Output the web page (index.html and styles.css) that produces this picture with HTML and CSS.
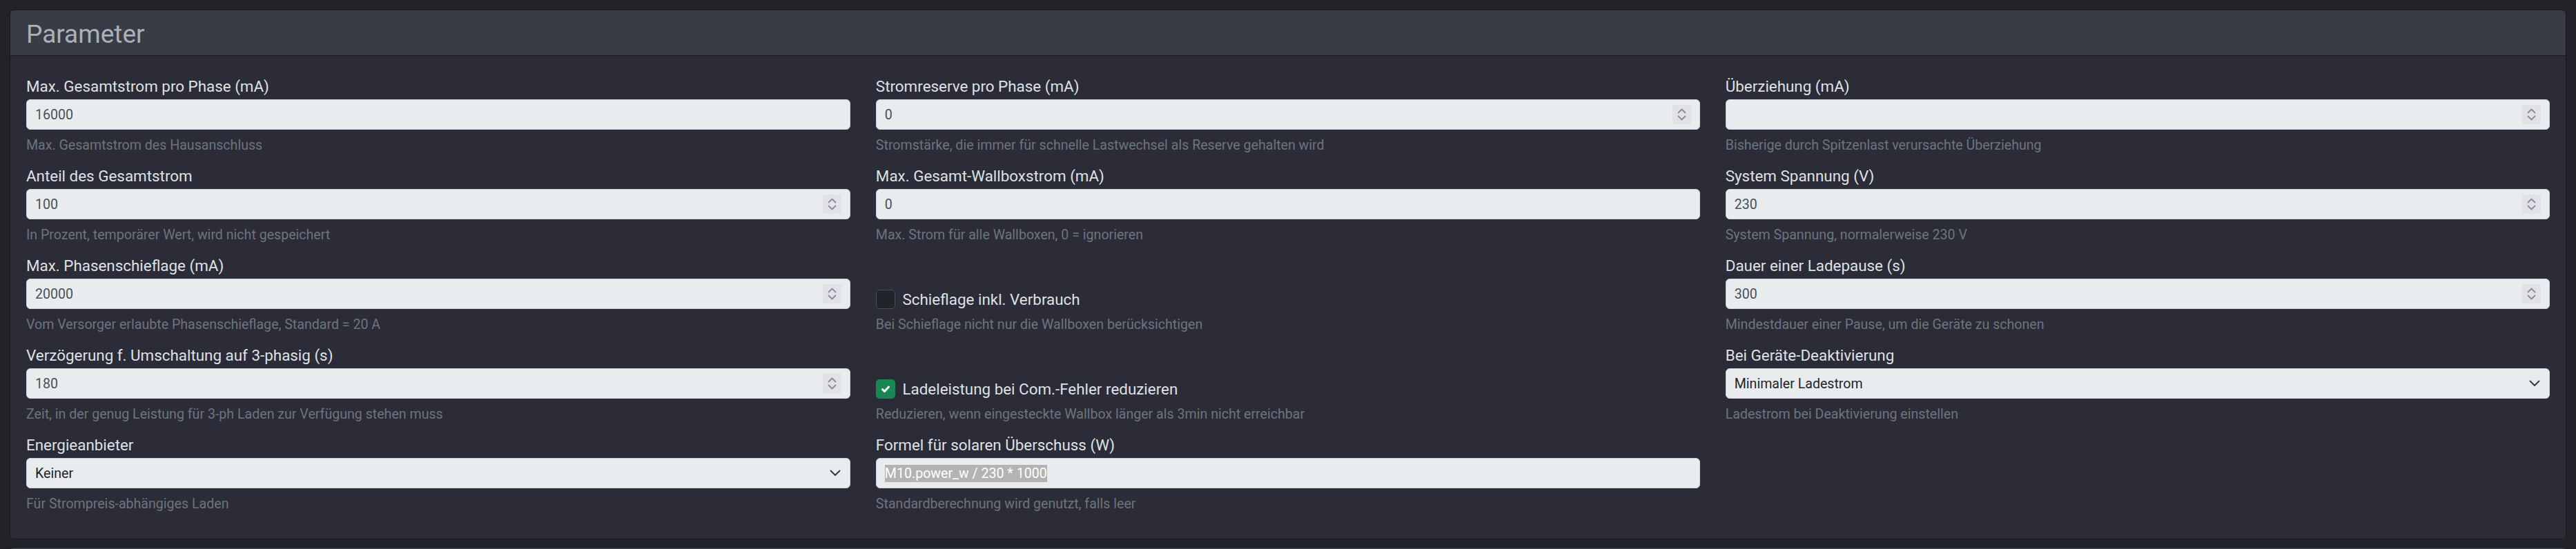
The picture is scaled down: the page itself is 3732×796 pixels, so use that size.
FILE: index.html
```html
<!DOCTYPE html>
<html lang="de">
<head>
<meta charset="utf-8">
<title>Parameter</title>
<link rel="stylesheet" href="styles.css">
</head>
<body>
<div class="page">
  <section class="card">
    <header class="card-header"><h3 class="card-title">Parameter</h3></header>
    <div class="card-body">
      <div class="grid">
        <!-- row 1 -->
        <div class="field">
          <label class="label">Max. Gesamtstrom pro Phase (mA)</label>
          <div class="control"><input type="text" value="16000"></div>
          <div class="help">Max. Gesamtstrom des Hausanschluss</div>
        </div>
        <div class="field">
          <label class="label">Stromreserve pro Phase (mA)</label>
          <div class="control"><input type="text" value="0"><span class="spin"><svg viewBox="0 0 27 28" width="27" height="28"><polyline points="8.5,11.5 13.5,6.5 18.5,11.5"/><polyline points="8.5,16.5 13.5,21.5 18.5,16.5"/></svg></span></div>
          <div class="help">Stromstärke, die immer für schnelle Lastwechsel als Reserve gehalten wird</div>
        </div>
        <div class="field">
          <label class="label">Überziehung (mA)</label>
          <div class="control"><input type="text" value=""><span class="spin"><svg viewBox="0 0 27 28" width="27" height="28"><polyline points="8.5,11.5 13.5,6.5 18.5,11.5"/><polyline points="8.5,16.5 13.5,21.5 18.5,16.5"/></svg></span></div>
          <div class="help">Bisherige durch Spitzenlast verursachte Überziehung</div>
        </div>
        <!-- row 2 -->
        <div class="field">
          <label class="label">Anteil des Gesamtstrom</label>
          <div class="control"><input type="text" value="100"><span class="spin"><svg viewBox="0 0 27 28" width="27" height="28"><polyline points="8.5,11.5 13.5,6.5 18.5,11.5"/><polyline points="8.5,16.5 13.5,21.5 18.5,16.5"/></svg></span></div>
          <div class="help">In Prozent, temporärer Wert, wird nicht gespeichert</div>
        </div>
        <div class="field">
          <label class="label">Max. Gesamt-Wallboxstrom (mA)</label>
          <div class="control"><input type="text" value="0"></div>
          <div class="help">Max. Strom für alle Wallboxen, 0 = ignorieren</div>
        </div>
        <div class="field">
          <label class="label">System Spannung (V)</label>
          <div class="control"><input type="text" value="230"><span class="spin"><svg viewBox="0 0 27 28" width="27" height="28"><polyline points="8.5,11.5 13.5,6.5 18.5,11.5"/><polyline points="8.5,16.5 13.5,21.5 18.5,16.5"/></svg></span></div>
          <div class="help">System Spannung, normalerweise 230 V</div>
        </div>
        <!-- row 3 -->
        <div class="field">
          <label class="label">Max. Phasenschieflage (mA)</label>
          <div class="control"><input type="text" value="20000"><span class="spin"><svg viewBox="0 0 27 28" width="27" height="28"><polyline points="8.5,11.5 13.5,6.5 18.5,11.5"/><polyline points="8.5,16.5 13.5,21.5 18.5,16.5"/></svg></span></div>
          <div class="help">Vom Versorger erlaubte Phasenschieflage, Standard = 20 A</div>
        </div>
        <div class="field field-check">
          <div class="check-row">
            <span class="check"></span>
            <span class="check-label">Schieflage inkl. Verbrauch</span>
          </div>
          <div class="help">Bei Schieflage nicht nur die Wallboxen berücksichtigen</div>
        </div>
        <div class="field">
          <label class="label">Dauer einer Ladepause (s)</label>
          <div class="control"><input type="text" value="300"><span class="spin"><svg viewBox="0 0 27 28" width="27" height="28"><polyline points="8.5,11.5 13.5,6.5 18.5,11.5"/><polyline points="8.5,16.5 13.5,21.5 18.5,16.5"/></svg></span></div>
          <div class="help">Mindestdauer einer Pause, um die Geräte zu schonen</div>
        </div>
        <!-- row 4 -->
        <div class="field">
          <label class="label">Verzögerung f. Umschaltung auf 3-phasig (s)</label>
          <div class="control"><input type="text" value="180"><span class="spin"><svg viewBox="0 0 27 28" width="27" height="28"><polyline points="8.5,11.5 13.5,6.5 18.5,11.5"/><polyline points="8.5,16.5 13.5,21.5 18.5,16.5"/></svg></span></div>
          <div class="help">Zeit, in der genug Leistung für 3-ph Laden zur Verfügung stehen muss</div>
        </div>
        <div class="field field-check">
          <div class="check-row">
            <span class="check checked"><svg viewBox="0 0 20 20" width="20" height="20"><path d="M5.5 10.5l3 3 6-6.5"/></svg></span>
            <span class="check-label">Ladeleistung bei Com.-Fehler reduzieren</span>
          </div>
          <div class="help">Reduzieren, wenn eingesteckte Wallbox länger als 3min nicht erreichbar</div>
        </div>
        <div class="field">
          <label class="label">Bei Geräte-Deaktivierung</label>
          <div class="control control-select"><select><option>Minimaler Ladestrom</option></select><svg class="chev" viewBox="0 0 16 10" width="16" height="10"><polyline points="1.5,1.5 8,8 14.5,1.5"/></svg></div>
          <div class="help">Ladestrom bei Deaktivierung einstellen</div>
        </div>
        <!-- row 5 -->
        <div class="field">
          <label class="label">Energieanbieter</label>
          <div class="control control-select"><select><option>Keiner</option></select><svg class="chev" viewBox="0 0 16 10" width="16" height="10"><polyline points="1.5,1.5 8,8 14.5,1.5"/></svg></div>
          <div class="help">Für Strompreis-abhängiges Laden</div>
        </div>
        <div class="field">
          <label class="label">Formel für solaren Überschuss (W)</label>
          <div class="control"><span class="selected">M10.power_w / 230 * 1000</span></div>
          <div class="help">Standardberechnung wird genutzt, falls leer</div>
        </div>
        <div class="field"></div>
      </div>
    </div>
  </section>
  <section class="card card-next"></section>
</div>
</body>
</html>
```

FILE: styles.css
```css
* { box-sizing: border-box; }

body {
  margin: 0;
  background: #212328;
  font-family: Roboto, "Liberation Sans", sans-serif;
  color: #dee2e6;
}

.page {
  padding: 14px 14px 0;
}

.card {
  background: #2b2c37;
  border: 1px solid #18191d;
  border-radius: 6px;
  overflow: hidden;
}

.card-header {
  background: #393c47;
  border-bottom: 1px solid #1c1d22;
  padding: 13px 23px 8px;
}

.card-title {
  margin: 0;
  font-size: 37px;
  font-weight: 400;
  line-height: 44px;
  color: #aab0b8;
}

.card-body {
  padding: 30px 23px 37px;
}

.grid {
  display: grid;
  grid-template-columns: repeat(3, 1fr);
  column-gap: 36.6px;
  row-gap: 17px;
}

.label {
  display: block;
  font-size: 22.4px;
  line-height: 28px;
  margin-bottom: 5px;
  color: #dee2e6;
}

.control {
  display: flex;
  align-items: center;
  height: 44px;
  background: #e9ecef;
  border: 1px solid #ced4da;
  border-radius: 6px;
  padding: 0 12px;
  font-size: 19.6px;
}

.control input,
.control select {
  flex: 1;
  min-width: 0;
  border: 0;
  background: transparent;
  font-family: inherit;
  font-size: 19.6px;
  color: #495057;
  padding: 0;
  margin: 0;
  outline: none;
  appearance: none;
  -webkit-appearance: none;
}

.control select {
  color: #212529;
}

.control-select {
  padding-right: 13px;
}

.chev {
  flex: none;
  fill: none;
  stroke: #343a40;
  stroke-width: 2;
  stroke-linecap: round;
  stroke-linejoin: round;
}

.spin {
  flex: none;
  width: 27px;
  height: 28px;
  background: #e2e1e7;
  display: flex;
}

.spin svg {
  fill: none;
  stroke: #8d8a97;
  stroke-width: 1.8;
  stroke-linecap: round;
  stroke-linejoin: round;
}

.selected {
  background: #b3b3b3;
  color: #ffffff;
  line-height: 25px;
  font-size: 19.6px;
}

.help {
  margin-top: 10px;
  font-size: 19.6px;
  line-height: 26px;
  color: #6c757d;
}

.field-check {
  padding-top: 33px;
}

.check-row {
  height: 44px;
  display: flex;
  align-items: flex-end;
  gap: 10.6px;
}

.check {
  flex: none;
  width: 28px;
  height: 28px;
  border-radius: 5px;
  border: 1px solid #4b5058;
  background: #212529;
  display: flex;
  align-items: center;
  justify-content: center;
}

.check.checked {
  background: #198754;
  border-color: #198754;
}

.check svg {
  fill: none;
  stroke: #ffffff;
  stroke-width: 3;
  stroke-linecap: round;
  stroke-linejoin: round;
}

.check-label {
  font-size: 22.4px;
  line-height: 28px;
  color: #dee2e6;
}

.card-next {
  margin-top: 11px;
  height: 40px;
  background: #393c47;
}
```
